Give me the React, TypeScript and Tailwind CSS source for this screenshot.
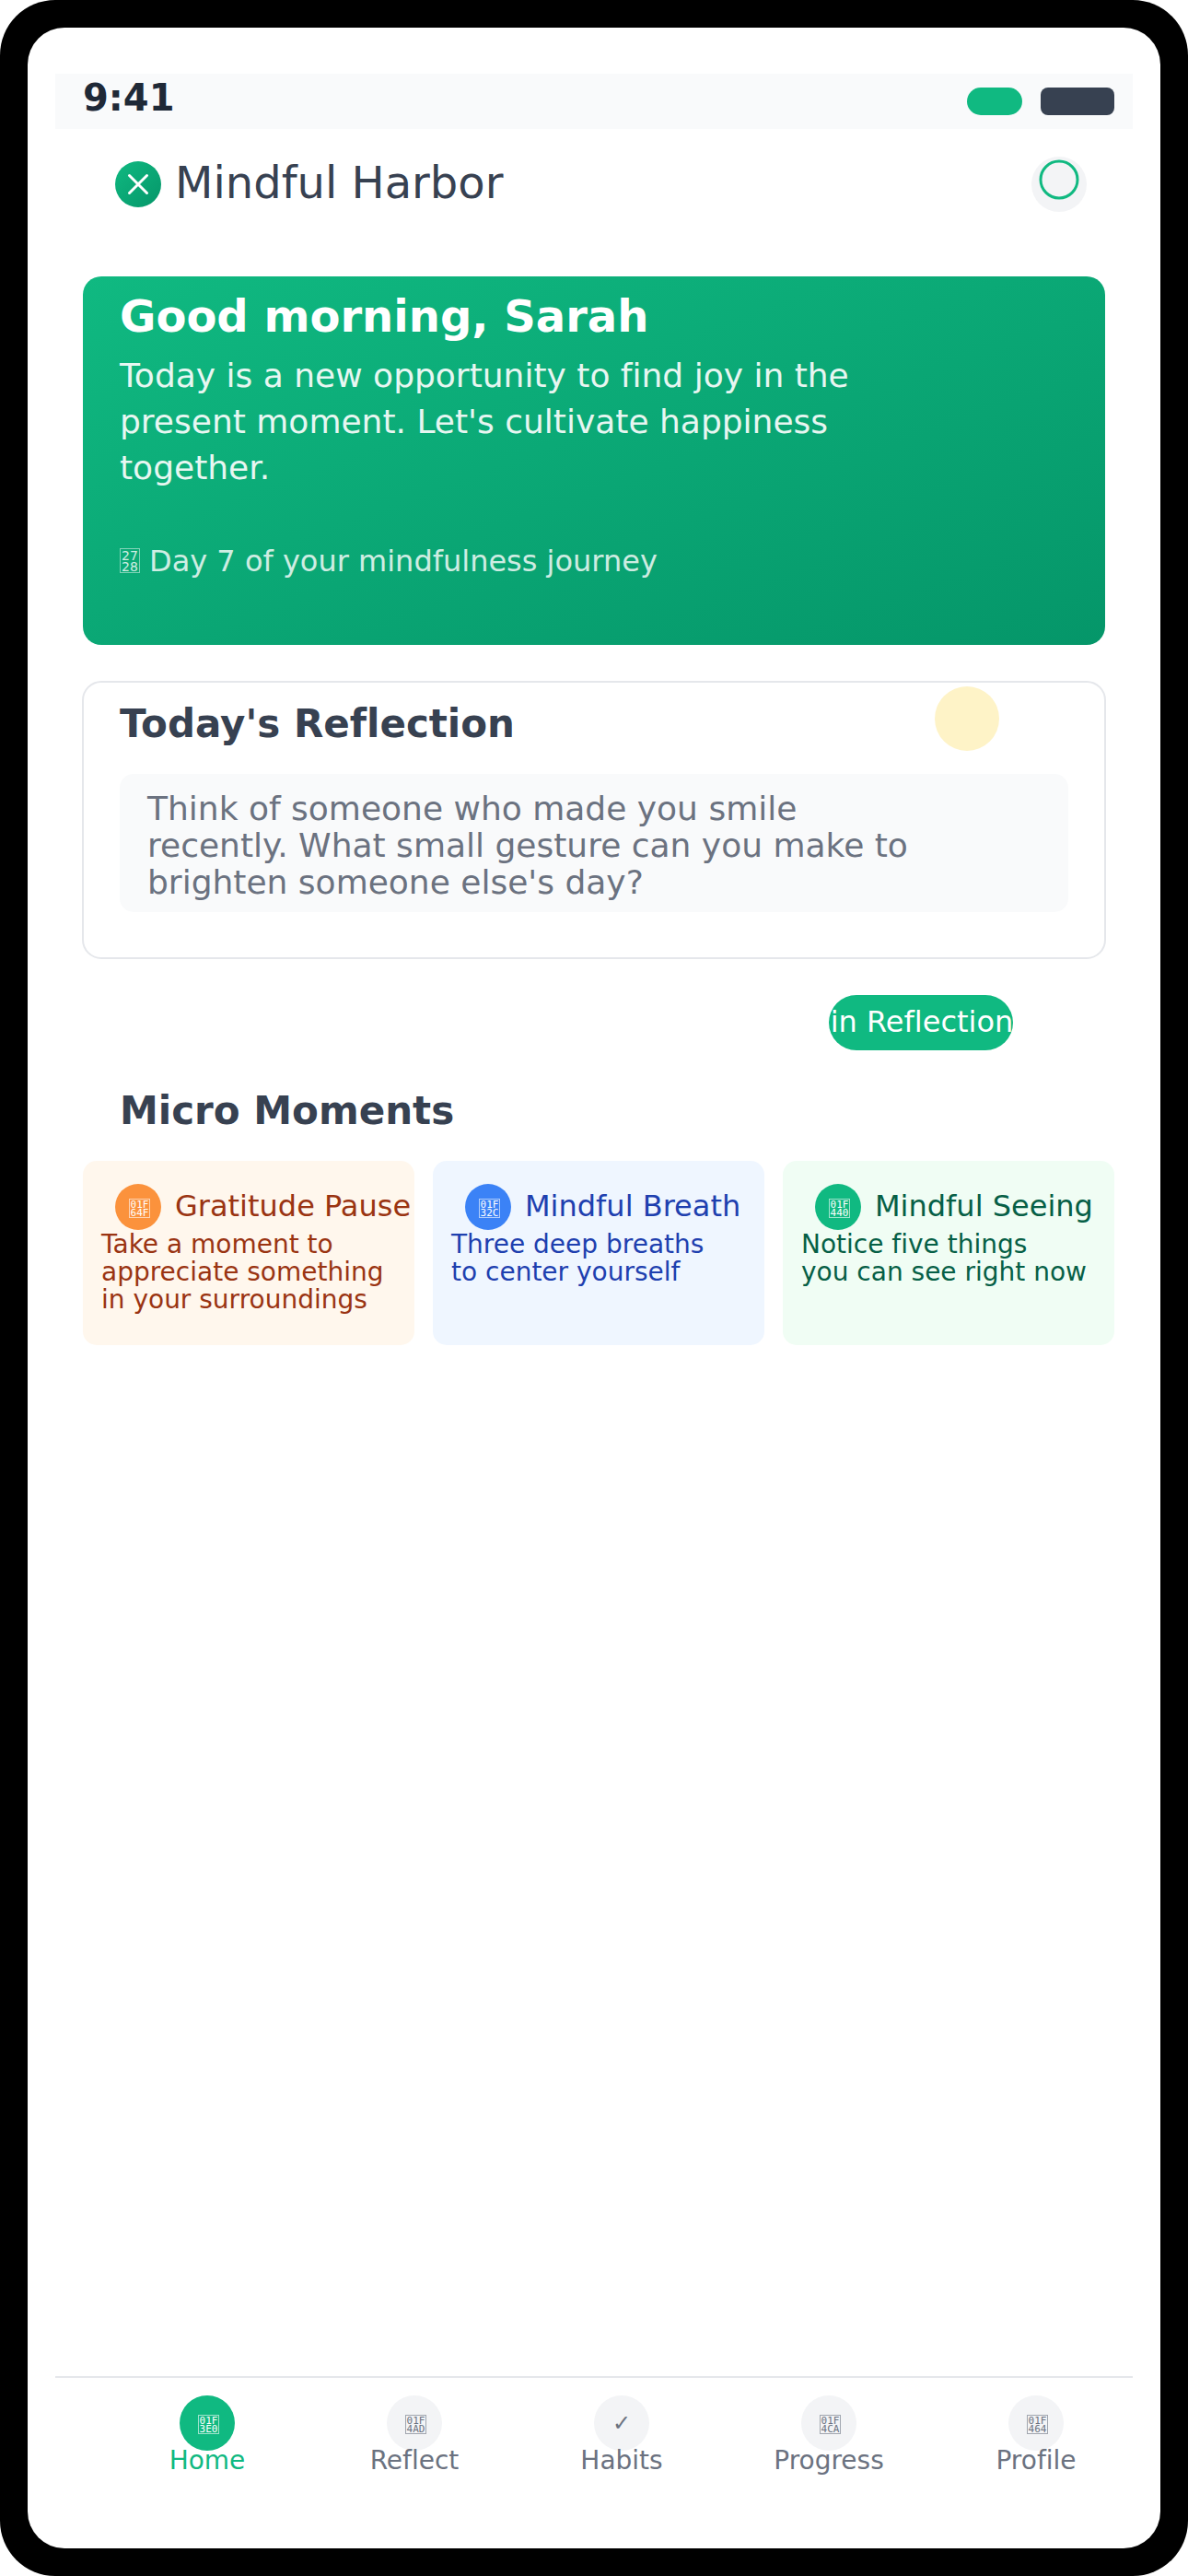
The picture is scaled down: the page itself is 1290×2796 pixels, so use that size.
import React from "react";

type Moment = {
  title: string;
  lines: string[];
  code: [string, string];
  card: string;
  text: string;
  dot: string;
};

const moments: Moment[] = [
  {
    title: "Gratitude Pause",
    lines: ["Take a moment to", "appreciate something", "in your surroundings"],
    code: ["01F", "64F"],
    card: "bg-[#fff7ed]",
    text: "text-[#9a3412]",
    dot: "bg-[#fb923c]",
  },
  {
    title: "Mindful Breath",
    lines: ["Three deep breaths", "to center yourself"],
    code: ["01F", "32C"],
    card: "bg-[#eff6ff]",
    text: "text-[#1e40af]",
    dot: "bg-[#3b82f6]",
  },
  {
    title: "Mindful Seeing",
    lines: ["Notice five things", "you can see right now"],
    code: ["01F", "440"],
    card: "bg-[#f0fdf4]",
    text: "text-[#065f46]",
    dot: "bg-[#10b981]",
  },
];

type Tab = { label: string; code?: [string, string]; active?: boolean };

const tabs: Tab[] = [
  { label: "Home", code: ["01F", "3E0"], active: true },
  { label: "Reflect", code: ["01F", "4AD"] },
  { label: "Habits" },
  { label: "Progress", code: ["01F", "4CA"] },
  { label: "Profile", code: ["01F", "464"] },
];

/* Small boxed code-point glyph: two rows of hex digits */
function HexGlyph({ code }: { code: [string, string] }) {
  return (
    <span className="relative left-[1.5px] top-[1.5px] flex h-[21px] w-[23px] flex-col items-center justify-center border border-current/60 pt-px font-['DejaVu_Sans_Mono',monospace] text-[11px] leading-[9px]">
      <span>{code[0]}</span>
      <span>{code[1]}</span>
    </span>
  );
}

function StatusBar() {
  return (
    <div className="flex h-[60px] shrink-0 items-start justify-between bg-[#f9fafb] pl-[30px] pr-5">
      <span className="mt-[6px] text-[40px] font-bold leading-[40px] text-[#1f2937]">9:41</span>
      <div className="mt-[15px] flex gap-5">
        <div className="h-[30px] w-[60px] rounded-[15px] bg-[#10b981]" />
        <div className="h-[30px] w-20 rounded-[8px] bg-[#374151]" />
      </div>
    </div>
  );
}

function Header() {
  return (
    <header className="mt-[30px] flex h-[60px] shrink-0 items-center pl-[65px] pr-[50px]">
      <svg width="50" height="50" viewBox="0 0 50 50">
        <defs>
          <linearGradient id="logo" x1="0" y1="0" x2="1" y2="1">
            <stop offset="0" stopColor="#10b981" />
            <stop offset="1" stopColor="#059669" />
          </linearGradient>
        </defs>
        <circle cx="25" cy="25" r="25" fill="url(#logo)" />
        <path d="M15.5 15.5 L34.5 34.5 M34.5 15.5 L15.5 34.5" stroke="#fff" strokeWidth="3" strokeLinecap="round" fill="none" />
      </svg>
      <h1 className="relative -top-[2px] ml-[15px] text-[48px] leading-[48px] text-[#374151]">Mindful Harbor</h1>
      <svg className="ml-auto" width="60" height="60" viewBox="0 0 60 60">
        <circle cx="30" cy="30" r="30" fill="#f3f4f6" />
        <circle cx="30" cy="25" r="20" fill="none" stroke="#10b981" strokeWidth="3" />
      </svg>
    </header>
  );
}

function Hero() {
  return (
    <section className="mx-[30px] mt-[70px] h-[400px] shrink-0 rounded-[20px] bg-[linear-gradient(to_bottom_right,#10b981,#059669)] px-10 pt-[19px] text-white">
      <h2 className="text-[48px] font-bold leading-[48px]">Good morning, Sarah</h2>
      <p className="mt-4 text-[36px] leading-[50px] opacity-90">
        Today is a new opportunity to find joy in the
        <br />
        present moment. Let's cultivate happiness
        <br />
        together.
      </p>
      <p className="mt-[56px] flex text-[32px] leading-[40px] opacity-80">
        <span className="mr-[10px] mt-[6px] flex h-[27px] w-[22px] flex-col items-center justify-center border border-white/60 pt-[1.5px] text-[14px] leading-[12px]">
          <span>27</span>
          <span>28</span>
        </span>
        <span>Day 7 of your mindfulness journey</span>
      </p>
    </section>
  );
}

function Reflection() {
  return (
    <section className="relative mx-[29px] mt-[39px] h-[302px] shrink-0 rounded-[21px] border-2 border-[#e5e7eb] px-[39px] pt-[24px]">
      <h2 className="text-[42px] font-bold leading-[42px] text-[#374151]">Today's Reflection</h2>
      <div className="absolute right-[114px] top-1 size-[70px] rounded-full bg-[#fef3c7]" />
      <div className="mt-[33px] h-[150px] rounded-[15px] bg-[#f9fafb] px-[30px] pt-[18px]">
        <p className="text-[36px] leading-[40px] text-[#6b7280]">
          Think of someone who made you smile
          <br />
          recently. What small gesture can you make to
          <br />
          brighten someone else's day?
        </p>
      </div>
    </section>
  );
}

export default function App() {
  return (
    <div className="h-[2796px] w-[1290px] bg-white font-['DejaVu_Sans',sans-serif] [font-variant-ligatures:none]">
      <div className="h-full rounded-[60px] bg-black p-[30px]">
        <main className="flex h-full flex-col rounded-[40px] bg-white px-[30px] pt-[50px]">
          <StatusBar />
          <Header />
          <Hero />
          <Reflection />
          {/* The label is wider than the pill and runs out on its left side */}
          <button className="ml-auto mr-[130px] mt-[39px] flex h-[60px] w-[200px] shrink-0 justify-center whitespace-nowrap rounded-[30px] bg-[#10b981] pr-[60px] pt-[9px] text-[32px] leading-[40px] text-white">
            Begin Reflection
          </button>
          <h2 className="ml-[70px] mt-[45px] text-[42px] font-bold leading-[42px] text-[#374151]">Micro Moments</h2>
          <section className="ml-[30px] mt-[33px] flex gap-5">
            {moments.map((m) => (
              <article key={m.title} className={`h-[200px] w-[360px] shrink-0 rounded-[15px] ${m.card} ${m.text}`}>
                <div className="flex pl-[35px] pt-[25px]">
                  <div className={`flex size-[50px] items-center justify-center rounded-full text-white ${m.dot}`}>
                    <HexGlyph code={m.code} />
                  </div>
                  <h3 className="ml-[15px] mt-1 whitespace-nowrap text-[32px] leading-[40px]">{m.title}</h3>
                </div>
                <div className="pl-5 pt-px text-[28px] leading-[30px]">
                  {m.lines.map((l) => (
                    <p key={l}>{l}</p>
                  ))}
                </div>
              </article>
            ))}
          </section>
          <nav className="mt-auto flex h-[187px] shrink-0 border-t-2 border-[#e5e7eb] pl-[52.5px] pt-[19px]">
            {tabs.map((t) => (
              <div
                key={t.label}
                className={`flex w-[225px] shrink-0 flex-col items-center ${t.active ? "text-[#10b981]" : "text-[#6b7280]"}`}
              >
                <div
                  className={`flex size-[60px] shrink-0 items-center justify-center rounded-full ${
                    t.active ? "bg-[#10b981] text-white" : "bg-[#f3f4f6]"
                  }`}
                >
                  {t.code ? <HexGlyph code={t.code} /> : <span className="text-[24px] leading-[24px]">✓</span>}
                </div>
                <span className="relative -mt-[4px] text-[28px] leading-[30px]">{t.label}</span>
              </div>
            ))}
          </nav>
        </main>
      </div>
    </div>
  );
}
